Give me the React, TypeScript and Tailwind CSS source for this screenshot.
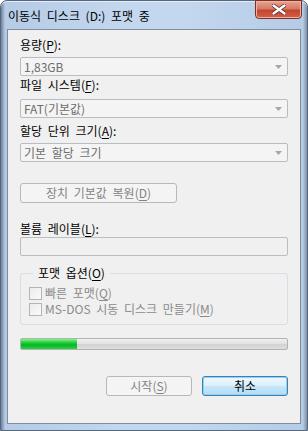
import { useState } from "react";

function Combo({ value }: { value: string }) {
  return (
    <div className="mt-[5px] flex h-[19px] w-full items-center justify-between rounded-[2px] border border-[#b9bdc1] bg-[#f4f4f4] pl-[3px] pr-[5px] text-[#6d6d6d]">
      <span className="leading-[14px]">{value}</span>
      <svg width="7" height="4" viewBox="0 0 7 4">
        <path d="M0 0h7L3.5 4z" fill="#a6a6a6" />
      </svg>
    </div>
  );
}

function Check({ children }: { children: React.ReactNode }) {
  return (
    <div className="flex h-[16px] items-center gap-[3px] text-[#8b8b8b]">
      <div className="h-[13px] w-[13px] border border-[#b4b4b4] bg-[linear-gradient(135deg,#ececec,#fafafa)]" />
      <span className="leading-[14px]">{children}</span>
    </div>
  );
}

export default function App() {
  const [progress] = useState(21);

  return (
    <div className="h-[431px] w-[308px] font-['Noto_Sans_CJK_KR','Noto_Sans',sans-serif] text-[12px] text-black [word-spacing:3px]">
      <div className="flex h-full w-full flex-col rounded-t-[7px] border border-[#56687e] bg-[linear-gradient(90deg,#6f8196_0px,#b5cbe6_4px,#c3d7ee_40%,#c3d7ee_60%,#b5cbe6_calc(100%-4px),#7d8fa3_100%)] px-[6px] pb-[6px] shadow-[inset_0_1px_0_#e4eefa]">
        <div className="flex h-[28px] items-start justify-between">
          <div className="pl-[1px] pt-[8px] leading-[14px] text-[12px] text-black">
            이동식 디스크 (D:) 포맷 중
          </div>
          <div className="-mr-px -mt-px flex h-[19px] w-[47px] items-center justify-center rounded-b-[4px] border border-[#7d2f22] bg-[linear-gradient(180deg,#e8a493_0%,#d57b66_45%,#c4452f_55%,#d2604a_100%)] shadow-[inset_0_0_0_1px_#eeb3a6]">
            <svg width="14" height="11" viewBox="0 0 14 11">
              <path
                d="M1.5 1.5L12.5 9.5M12.5 1.5L1.5 9.5"
                stroke="#5a2a22"
                strokeWidth="4"
                strokeLinecap="round"
              />
              <path
                d="M1.5 1.5L12.5 9.5M12.5 1.5L1.5 9.5"
                stroke="#ffffff"
                strokeWidth="2.4"
                strokeLinecap="round"
              />
            </svg>
          </div>
        </div>

        <div className="flex flex-1 flex-col border border-[#818d9b] bg-[#f0f0f0] px-[12px]">
          <div className="mt-[8px] h-[14px] leading-[14px]">
            용량(<u className="underline-offset-2">P</u>):
          </div>
          <Combo value="1,83GB" />

          <div className="mt-[2px] h-[14px] leading-[14px]">
            파일 시스템(<u className="underline-offset-2">F</u>):
          </div>
          <div className="mt-[2px]">
            <Combo value="FAT(기본값)" />
          </div>

          <div className="mt-[6px] h-[14px] leading-[14px]">
            할당 단위 크기(<u className="underline-offset-2">A</u>):
          </div>
          <Combo value="기본 할당 크기" />

          <div className="mt-[21px] flex h-[20px] w-[157px] items-center justify-center rounded-[3px] border border-[#b5b9bd] bg-[#f4f4f4] leading-[14px] text-[#838383]">
            장치 기본값 복원(<u className="underline-offset-2">D</u>)
          </div>

          <div className="mt-[19px] h-[14px] leading-[14px]">
            볼륨 레이블(<u className="underline-offset-2">L</u>):
          </div>
          <div className="mt-[1px] h-[19px] w-full rounded-[2px] border border-[#b9bdc1] bg-[#f0f0f0]" />

          <fieldset className="mt-[10px] rounded-[3px] border border-[#d5dfe5] pb-[7px] pl-[8px]">
            <legend className="ml-[4px] px-[5px] leading-[14px]">
              포맷 옵션(<u className="underline-offset-2">O</u>)
            </legend>
            <div className="pt-[5px]">
              <Check>
                빠른 포맷(<u className="underline-offset-2">Q</u>)
              </Check>
              <Check>
                MS-DOS 시동 디스크 만들기(<u className="underline-offset-2">M</u>)
              </Check>
            </div>
          </fieldset>

          <div className="mt-[13px] h-[12px] w-full overflow-hidden rounded-[2px] border border-[#b2b2b2] bg-[linear-gradient(180deg,#f2f2f2_0%,#e2e2e2_45%,#d3d3d3_55%,#dedede_100%)]">
            <div
              className="h-full bg-[linear-gradient(180deg,#8ef08f_0%,#22d23a_35%,#07b324_60%,#2fd045_100%)]"
              style={{ width: `${progress}%` }}
            />
          </div>

          <div className="mt-[26px] flex justify-end gap-[10px]">
            <div className="flex h-[20px] w-[86px] items-center justify-center rounded-[3px] border border-[#b5b9bd] bg-[#f4f4f4] leading-[14px] text-[#838383]">
              시작(<u className="underline-offset-2">S</u>)
            </div>
            <div className="flex h-[20px] w-[86px] items-center justify-center rounded-[3px] border border-[#3c7fb1] bg-[linear-gradient(180deg,#eef7fd_0%,#dcf0fc_48%,#c4e6fa_52%,#b6dcf3_100%)] leading-[14px] shadow-[inset_0_0_0_1px_#8fd4f7]">
              취소
            </div>
          </div>
        </div>
      </div>
    </div>
  );
}
